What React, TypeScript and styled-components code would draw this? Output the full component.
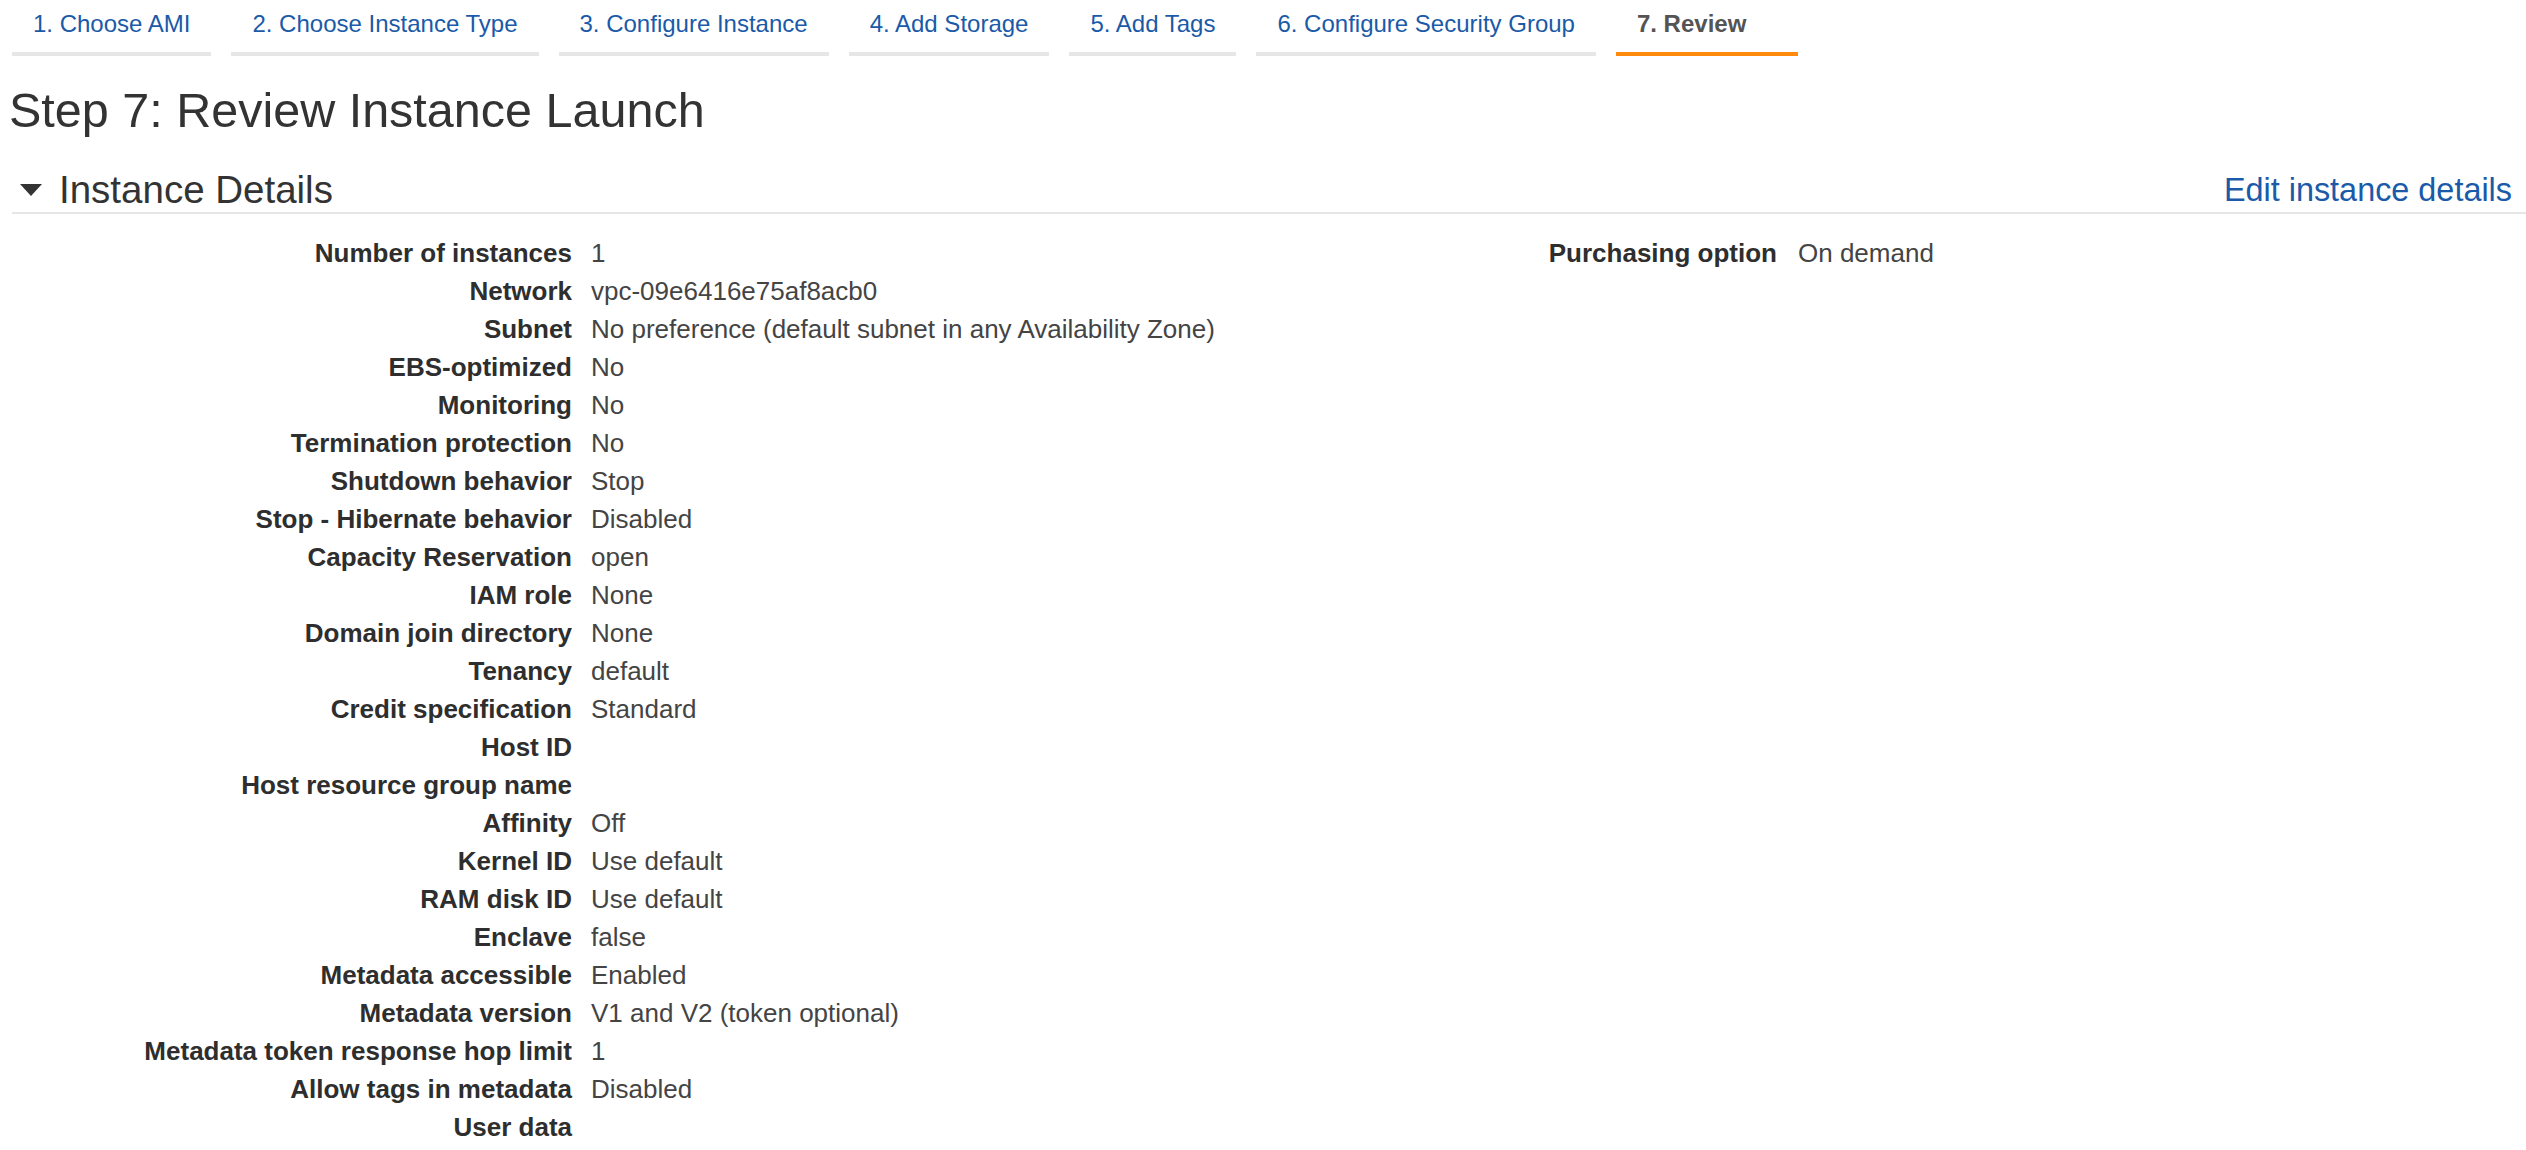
import React from "react";
import styled, { createGlobalStyle } from "styled-components";

const GlobalStyle = createGlobalStyle`
  body {
    margin: 0;
    background: #fff;
    font-family: "Liberation Sans", Arial, Helvetica, sans-serif;
    color: #333;
  }
`;

const Page = styled.div`
  padding-left: 12px;
`;

const Steps = styled.nav`
  display: flex;
  gap: 20px;
`;

const Step = styled.a<{ $active?: boolean }>`
  display: block;
  padding: 10px ${(p) => (p.$active ? "52px" : "21px")} 14px 21px;
  font-size: 24px;
  line-height: 28px;
  font-weight: ${(p) => (p.$active ? "bold" : "normal")};
  color: ${(p) => (p.$active ? "#545454" : "#1a5aa8")};
  border-bottom: 4px solid ${(p) => (p.$active ? "#ff8a0e" : "#e6e6e6")};
  text-decoration: none;
  white-space: nowrap;
`;

const Title = styled.h1`
  margin: 26px 0 0 -3px;
  font-size: 48.5px;
  line-height: 56px;
  font-weight: normal;
  color: #333;
`;

const SectionHeader = styled.div`
  display: flex;
  align-items: center;
  justify-content: space-between;
  height: 44px;
  margin-top: 30px;
  border-bottom: 2px solid #e6e6e6;
`;

const SectionTitle = styled.div`
  display: flex;
  align-items: center;
  gap: 17px;
  padding-left: 8px;
  font-size: 38.5px;
  color: #333;
`;

const Caret = styled.span`
  width: 0;
  height: 0;
  border-left: 11px solid transparent;
  border-right: 11px solid transparent;
  border-top: 12px solid #333;
`;

const EditLink = styled.a`
  margin-right: 14px;
  font-size: 32.4px;
  color: #1a5aa8;
  text-decoration: none;
`;

const Details = styled.div`
  display: flex;
  margin-top: 20px;
`;

const DetailColumn = styled.div<{ $labelWidth: number; $gap: number; $width?: number }>`
  display: grid;
  grid-template-columns: ${(p) => p.$labelWidth}px 1fr;
  column-gap: ${(p) => p.$gap}px;
  align-content: start;
  width: ${(p) => (p.$width ? `${p.$width}px` : "auto")};
  flex: ${(p) => (p.$width ? "none" : "1")};
  font-size: 26px;
  line-height: 38px;
`;

const Label = styled.div`
  text-align: right;
  font-weight: bold;
  color: #2e2e2e;
  white-space: nowrap;
`;

const Value = styled.div`
  color: #444;
  white-space: nowrap;
`;

const steps = [
  "1. Choose AMI",
  "2. Choose Instance Type",
  "3. Configure Instance",
  "4. Add Storage",
  "5. Add Tags",
  "6. Configure Security Group",
  "7. Review",
];

const leftRows: [string, string][] = [
  ["Number of instances", "1"],
  ["Network", "vpc-09e6416e75af8acb0"],
  ["Subnet", "No preference (default subnet in any Availability Zone)"],
  ["EBS-optimized", "No"],
  ["Monitoring", "No"],
  ["Termination protection", "No"],
  ["Shutdown behavior", "Stop"],
  ["Stop - Hibernate behavior", "Disabled"],
  ["Capacity Reservation", "open"],
  ["IAM role", "None"],
  ["Domain join directory", "None"],
  ["Tenancy", "default"],
  ["Credit specification", "Standard"],
  ["Host ID", ""],
  ["Host resource group name", ""],
  ["Affinity", "Off"],
  ["Kernel ID", "Use default"],
  ["RAM disk ID", "Use default"],
  ["Enclave", "false"],
  ["Metadata accessible", "Enabled"],
  ["Metadata version", "V1 and V2 (token optional)"],
  ["Metadata token response hop limit", "1"],
  ["Allow tags in metadata", "Disabled"],
  ["User data", ""],
];

const rightRows: [string, string][] = [["Purchasing option", "On demand"]];

function App() {
  return (
    <Page>
      <GlobalStyle />
      <Steps>
        {steps.map((s, i) => (
          <Step key={s} href="#" $active={i === steps.length - 1}>
            {s}
          </Step>
        ))}
      </Steps>
      <Title>Step 7: Review Instance Launch</Title>
      <SectionHeader>
        <SectionTitle>
          <Caret />
          Instance Details
        </SectionTitle>
        <EditLink href="#">Edit instance details</EditLink>
      </SectionHeader>
      <Details>
        <DetailColumn $labelWidth={560} $gap={19} $width={1254}>
          {leftRows.map(([label, value]) => (
            <React.Fragment key={label}>
              <Label>{label}</Label>
              <Value>{value}</Value>
            </React.Fragment>
          ))}
        </DetailColumn>
        <DetailColumn $labelWidth={511} $gap={21}>
          {rightRows.map(([label, value]) => (
            <React.Fragment key={label}>
              <Label>{label}</Label>
              <Value>{value}</Value>
            </React.Fragment>
          ))}
        </DetailColumn>
      </Details>
    </Page>
  );
}

export default App;
